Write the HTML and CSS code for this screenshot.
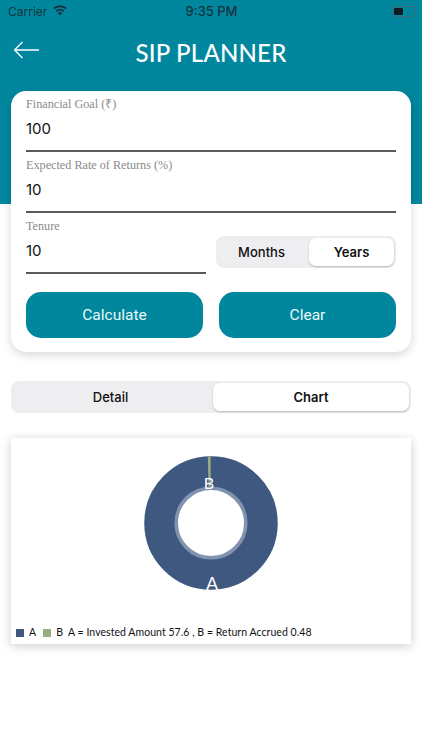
FILE: index.html
```html
<!DOCTYPE html>
<html lang="en">
<head>
<meta charset="utf-8">
<title>SIP Planner</title>
<link rel="stylesheet" href="styles.css">
</head>
<body>
<header class="hero">
  <div class="status">
    <div class="status-left">
      <span>Carrier</span>
      <svg class="wifi" viewBox="0 0 16 12" width="14" height="11"><path d="M8 11.600 5.600 8.900a3.500 3.500 0 0 1 4.800 0zM4.400 7.600 2.900 5.900a7.600 7.600 0 0 1 10.200 0l-1.500 1.700a5.400 5.400 0 0 0-7.200 0zM1.700 4.600.2 2.900a11.700 11.700 0 0 1 15.600 0l-1.500 1.700a9.500 9.500 0 0 0-12.600 0z" fill="#16343d"/></svg>
    </div>
    <span class="clock">9:35 PM</span>
    <div class="status-right">
      <div class="battery"><span class="battery-fill"></span></div>
    </div>
  </div>
  <div class="nav">
    <svg class="back" viewBox="0 0 27 18" width="27" height="18"><path d="M26 9H1.500M9.500 1 1.500 9l8 8" fill="none" stroke="#fff" stroke-width="1.300"/></svg>
    <h1>SIP PLANNER</h1>
  </div>
</header>

<section class="card">
  <div class="field">
    <label>Financial Goal (₹)</label>
    <div class="value">100</div>
  </div>
  <div class="field">
    <label>Expected Rate of Returns (%)</label>
    <div class="value">10</div>
  </div>
  <div class="tenure">
    <div class="field tenure-field">
      <label>Tenure</label>
      <div class="value">10</div>
    </div>
    <div class="segment small">
      <span class="seg">Months</span>
      <span class="seg on">Years</span>
    </div>
  </div>
  <div class="actions">
    <button class="btn">Calculate</button>
    <button class="btn">Clear</button>
  </div>
</section>

<div class="segment wide">
  <span class="seg">Detail</span>
  <span class="seg on">Chart</span>
</div>

<section class="chart">
  <svg class="donut" viewBox="0 0 400 175" width="400" height="175">
    <circle cx="200" cy="85" r="50" fill="none" stroke="#3f5880" stroke-width="33.500"/>
    <path d="M196.800 18.500h2.800l.2 34h-2.200z" fill="#9aac82"/>
    <circle cx="200" cy="85" r="34.800" fill="#fff" stroke="#8293b0" stroke-width="3.600"/>
    <text class="slice" x="198" y="50.500">B</text>
    <text class="slice big" x="201" y="152">A</text>
  </svg>
  <div class="legend">
    <i class="key key-a"></i><span>A</span>
    <i class="key key-b"></i><span>B</span>
    <span>A = Invested Amount 57.6 , B = Return Accrued 0.48</span>
  </div>
</section>
</body>
</html>
```
FILE: styles.css
```css
* { box-sizing: border-box; }
html, body { margin: 0; padding: 0; }
body {
  width: 422px;
  height: 750px;
  overflow: hidden;
  background: #fff;
  font-family: Inter, Roboto, sans-serif;
  color: #111;
}
.hero {
  height: 204px;
  background: #00879e;
  padding: 3px 0 0;
}
.status {
  display: flex;
  align-items: center;
  height: 16px;
  padding: 0 7px 0 8px;
  color: #16343d;
  font-size: 12px;
}
.status-left { flex: 1; display: flex; align-items: center; gap: 6px; }
.status-right { flex: 1; display: flex; justify-content: flex-end; }
.wifi { margin-top: -2px; }
.clock { font-weight: 500; font-size: 13px; }
.battery {
  width: 23px;
  height: 11px;
  border: 1px solid #3f6a78;
  border-radius: 3px;
  padding: 1px;
}
.battery-fill { display: block; width: 9px; height: 7px; background: #0b1d22; border-radius: 1px; }
.nav {
  position: relative;
  display: flex;
  justify-content: center;
  padding-top: 19px;
}
.back { position: absolute; left: 13px; top: 22px; }
h1 {
  margin: 0;
  font-family: Lato, sans-serif;
  font-weight: 500;
  font-size: 24px;
  line-height: 29px;
  letter-spacing: .2px;
  color: #fff;
}
.card {
  width: 400px;
  height: 261px;
  margin: -113px 0 0 11px;
  padding: 6px 15px 0;
  background: #fff;
  border-radius: 15px;
  box-shadow: 0 3px 10px rgba(0,0,0,.16);
  position: relative;
}
.field {
  height: 55px;
  margin-bottom: 6px;
  border-bottom: 2px solid #5a5a5a;
}
.field label {
  display: block;
  font-family: "Liberation Serif", serif;
  font-size: 12.200px;
  line-height: 14px;
  color: #8a8a8a;
}
.value {
  font-size: 15px;
  line-height: 18px;
  margin-top: 9px;
  color: #111;
}
.tenure { display: flex; justify-content: space-between; }
.tenure-field { width: 180px; margin-bottom: 0; }
.segment {
  display: flex;
  background: #eeeef0;
  padding: 2px;
}
.seg {
  display: flex;
  align-items: center;
  justify-content: center;
  font-size: 13px;
  font-weight: 500;
}
.seg.on {
  background: #fff;
  font-weight: 600;
  box-shadow: 0 1px 2px rgba(0,0,0,.22);
}
.small { width: 180px; height: 32px; margin-top: 17px; border-radius: 8px; }
.small .seg { border-radius: 7px; width: 91px; padding-right: 4px; }
.small .seg.on { width: 85px; padding-right: 0; }
.wide { width: 400px; height: 32px; margin: 29px 0 0 11px; border-radius: 8px; }
.wide .seg { border-radius: 7px; width: 200px; padding-right: 5px; }
.wide .seg.on { width: 196px; padding-right: 0; }
.actions { display: flex; justify-content: space-between; margin-top: 18px; }
.btn {
  width: 177px;
  height: 46px;
  border: 0;
  border-radius: 15px;
  background: #00879e;
  color: #eaf7f9;
  font-family: Roboto, sans-serif;
  font-size: 15.500px;
}
.chart {
  width: 400px;
  height: 206px;
  margin: 25px 0 0 11px;
  background: #fff;
  box-shadow: 0 2px 10px rgba(0,0,0,.2);
}
.donut { display: block; }
.slice { fill: #fff; font-family: Lato, sans-serif; font-size: 16px; text-anchor: middle; }
.slice.big { font-size: 18px; }
.legend {
  display: flex;
  align-items: center;
  padding: 13px 0 0 5px;
  font-family: Lato, sans-serif;
  font-size: 10.500px;
  line-height: 13px;
  letter-spacing: .05px;
  color: #111;
}
.key { width: 8px; height: 8px; margin-right: 5px; }
.key-a { background: #3f5880; }
.key-b { background: #9aac82; margin-left: 7px; }
.legend span:last-child { margin-left: 5px; }
```
